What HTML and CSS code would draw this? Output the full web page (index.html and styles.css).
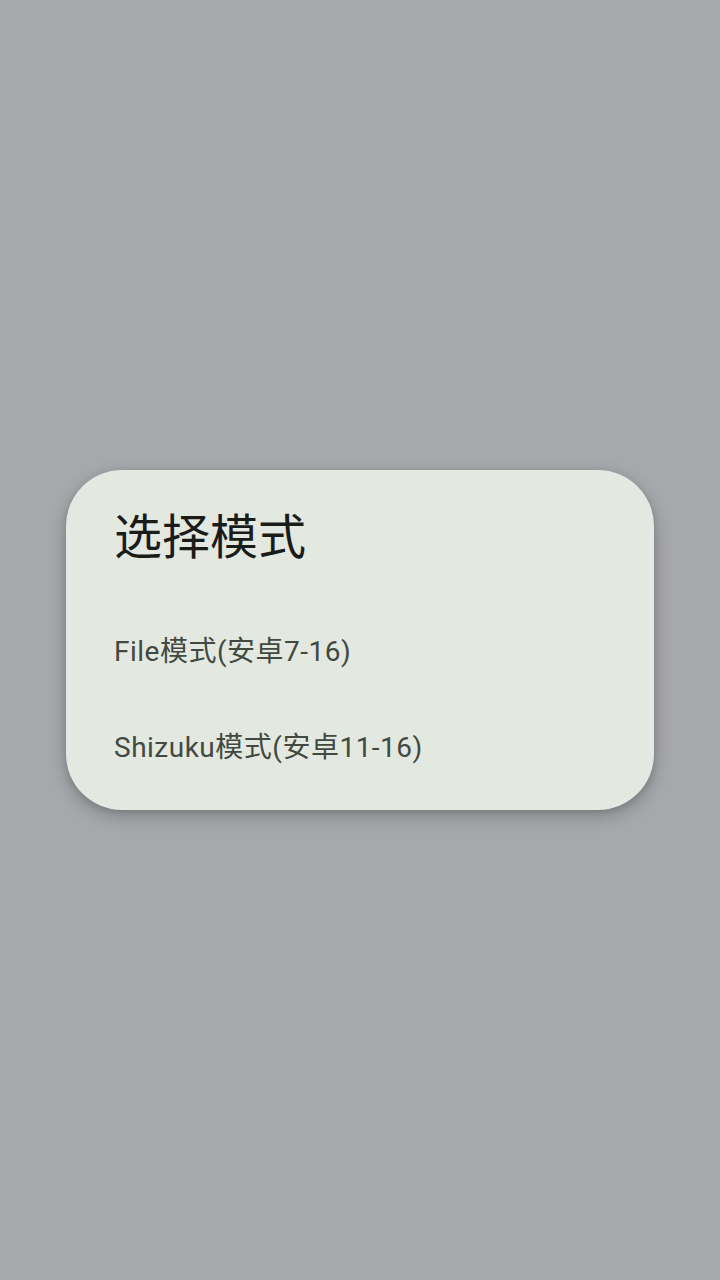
FILE: index.html
```html
<!DOCTYPE html>
<html lang="zh">
<head>
<meta charset="utf-8">
<link rel="stylesheet" href="styles.css">
</head>
<body>
<div class="screen">
  <div class="dialog">
    <div class="title">选择模式</div>
    <div class="list">
      <div class="item">File模式(安卓7-16)</div>
      <div class="item">Shizuku模式(安卓11-16)</div>
    </div>
  </div>
</div>
</body>
</html>
```
FILE: styles.css
```css
html, body {
  margin: 0;
  padding: 0;
  width: 720px;
  height: 1280px;
  background: #a7a8ac;
  font-family: Roboto, "Noto Sans CJK SC", sans-serif;
}
.screen {
  width: 720px;
  height: 1280px;
  display: flex;
  align-items: center;
  justify-content: center;
}
.dialog {
  width: 588px;
  height: 340px;
  box-sizing: border-box;
  background: #e3e8e1;
  border-radius: 56px;
  box-shadow: 0 6px 18px rgba(0, 0, 0, 0.22), 0 2px 6px rgba(0, 0, 0, 0.12);
  padding: 36px 48px 0 48px;
  display: flex;
  flex-direction: column;
}
.title {
  font-size: 48px;
  line-height: 64px;
  color: #1a1c19;
}
.list {
  margin-top: 31px;
  display: flex;
  flex-direction: column;
}
.item {
  height: 96px;
  display: flex;
  align-items: center;
  font-size: 28px;
  letter-spacing: 0.5px;
  color: #424940;
}
```
